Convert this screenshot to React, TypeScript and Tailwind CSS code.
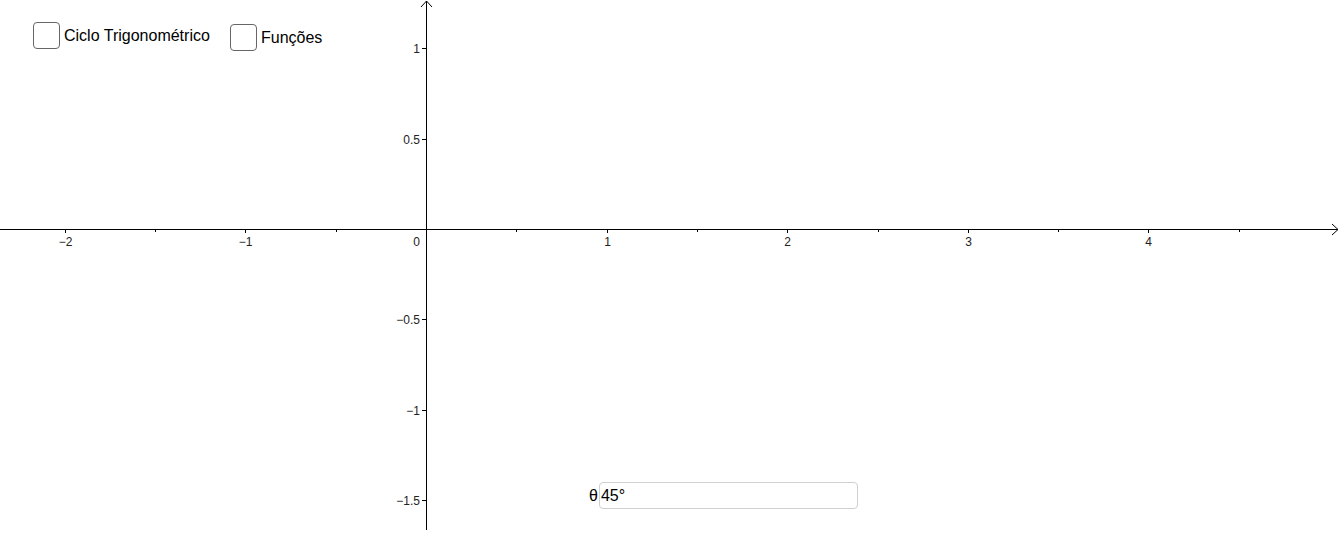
const UNIT = 180.6;
const OX = 426;
const OY = 229;

const xTicks = [-2, -1, 1, 2, 3, 4];
const xMinor = [-2.5, -1.5, -0.5, 0.5, 1.5, 2.5, 3.5, 4.5];
const yTicks = [1, 0.5, -0.5, -1, -1.5];

const fmt = (n: number) => (n < 0 ? "\u2212" + Math.abs(n) : String(n));

function Axes() {
  return (
    <svg
      className="absolute inset-0"
      width={1341}
      height={533}
      style={{ fontFamily: '"Liberation Sans", Arial, sans-serif' }}
    >
      {/* eixo x */}
      <line x1={0} y1={OY + 0.5} x2={1338} y2={OY + 0.5} stroke="#000" strokeWidth={1} shapeRendering="crispEdges" />
      <polyline points={`1332,${OY - 5} 1338,${OY + 0.5} 1332,${OY + 6}`} fill="none" stroke="#000" strokeWidth={1} />
      {/* eixo y */}
      <line x1={OX + 0.5} y1={1} x2={OX + 0.5} y2={530} stroke="#000" strokeWidth={1} shapeRendering="crispEdges" />
      <polyline points={`${OX - 5},7 ${OX + 0.5},1 ${OX + 6},7`} fill="none" stroke="#000" strokeWidth={1} />

      {xTicks.map((k) => {
        const x = Math.round(OX + UNIT * k) + 0.5;
        return (
          <g key={k}>
            <line x1={x} y1={OY} x2={x} y2={OY + 4} stroke="#000" shapeRendering="crispEdges" />
            <text x={x} y={246} fontSize={12} textAnchor="middle" fill="#222">
              {fmt(k)}
            </text>
          </g>
        );
      })}
      {xMinor.map((k) => {
        const x = Math.round(OX + UNIT * k) + 0.5;
        return <line key={k} x1={x} y1={OY} x2={x} y2={OY + 3} stroke="#000" shapeRendering="crispEdges" />;
      })}
      <text x={420} y={246} fontSize={12} textAnchor="end" fill="#222">
        0
      </text>

      {yTicks.map((k) => {
        const y = Math.round(OY - UNIT * k) + 0.5;
        return (
          <g key={k}>
            <line x1={OX - 4} y1={y} x2={OX} y2={y} stroke="#000" shapeRendering="crispEdges" />
            <text x={420} y={y + 4} fontSize={12} textAnchor="end" fill="#222">
              {fmt(k)}
            </text>
          </g>
        );
      })}
    </svg>
  );
}

function Checkbox({ label }: { label: string }) {
  return (
    <label className="flex items-center gap-[4px]">
      <span className="w-[27px] h-[27px] rounded-[4px] border border-[#666] bg-white block" />
      <span className="text-[16px] text-black leading-none">{label}</span>
    </label>
  );
}

export default function App() {
  return (
    <div
      className="relative w-[1341px] h-[533px] bg-white overflow-hidden"
      style={{ fontFamily: '"Liberation Sans", Arial, sans-serif' }}
    >
      <Axes />

      <div className="absolute left-[33px] top-[22px]">
        <Checkbox label="Ciclo Trigonométrico" />
      </div>
      <div className="absolute left-[230px] top-[24px]">
        <Checkbox label="Funções" />
      </div>

      <div className="absolute left-[589px] top-[482px] flex items-center gap-[1px]">
        <span className="text-[16px] text-black leading-none">θ</span>
        <div className="w-[259px] h-[27px] rounded-[4px] border border-[#d0d0d0] bg-white flex items-center px-[1px]">
          <span className="text-[16px] text-black leading-none">45°</span>
        </div>
      </div>
    </div>
  );
}
